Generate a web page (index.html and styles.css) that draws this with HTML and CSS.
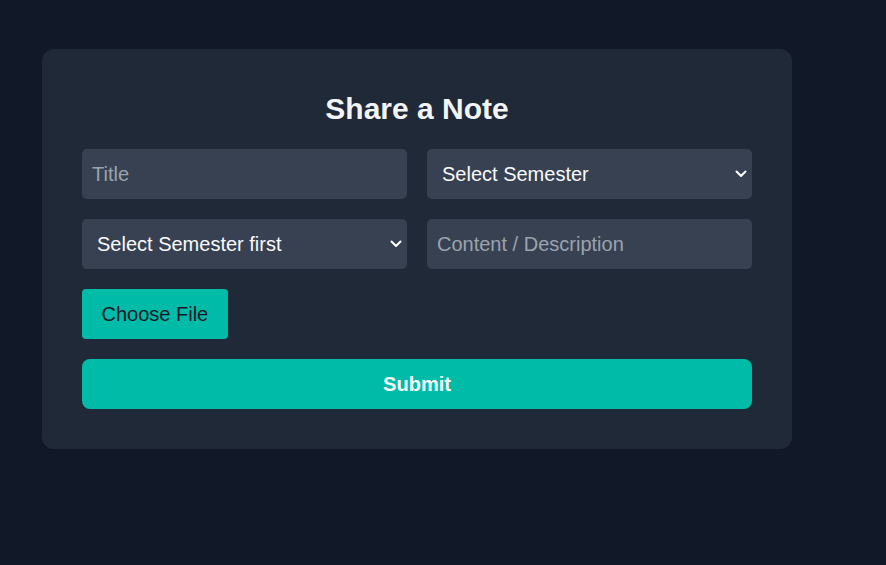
FILE: index.html
```html
<!DOCTYPE html>
<html lang="en">
<head>
<meta charset="utf-8">
<title>Share a Note</title>
<link rel="stylesheet" href="styles.css">
</head>
<body>
<main class="page">
  <form class="card">
    <h2 class="card-title">Share a Note</h2>
    <div class="grid">
      <input class="field" type="text" placeholder="Title">
      <div class="select-wrap">
        <select class="field select">
          <option>Select Semester</option>
        </select>
        <svg class="chevron" width="12" height="8" viewBox="0 0 12 8"><path d="M1.5 1.5 L6 6 L10.5 1.5" fill="none" stroke="#ffffff" stroke-width="2" stroke-linecap="round" stroke-linejoin="round"/></svg>
      </div>
      <div class="select-wrap">
        <select class="field select">
          <option>Select Semester first</option>
        </select>
        <svg class="chevron" width="12" height="8" viewBox="0 0 12 8"><path d="M1.5 1.5 L6 6 L10.5 1.5" fill="none" stroke="#ffffff" stroke-width="2" stroke-linecap="round" stroke-linejoin="round"/></svg>
      </div>
      <input class="field" type="text" placeholder="Content / Description">
    </div>
    <div class="file-row">
      <label class="file-btn">Choose File<input class="file-input" type="file"></label>
    </div>
    <button class="submit" type="button">Submit</button>
  </form>
</main>
</body>
</html>
```

FILE: styles.css
```css
* { box-sizing: border-box; }
html, body {
  margin: 0;
  background: #111827;
  font-family: "Liberation Sans", Arial, sans-serif;
}
.page {
  padding: 49px 0 0 42px;
  min-height: 565px;
}
.card {
  width: 750px;
  background: #1f2937;
  border-radius: 12px;
  padding: 40px;
  display: flex;
  flex-direction: column;
}
.card-title {
  margin: 3px 0 23px;
  text-align: center;
  color: #f3f4f6;
  font-size: 30px;
  font-weight: bold;
  line-height: 34px;
}
.grid {
  display: grid;
  grid-template-columns: 1fr 1fr;
  gap: 20px;
}
.field {
  width: 100%;
  height: 50px;
  border: none;
  outline: none;
  border-radius: 5px;
  background: #374151;
  color: #f9fafb;
  font-family: "Liberation Sans", Arial, sans-serif;
  font-size: 20px;
  padding: 0 10px;
}
.field::placeholder { color: #9ca3af; }
.select-wrap { position: relative; }
.select {
  -webkit-appearance: none;
  appearance: none;
  padding: 0 30px 0 15px;
}
.chevron {
  position: absolute;
  right: 5px;
  top: 21px;
  pointer-events: none;
}
.file-row {
  margin-top: 20px;
  display: flex;
}
.file-btn {
  display: flex;
  align-items: center;
  height: 50px;
  padding: 0 19.5px;
  background: #00bba7;
  color: #111827;
  border-radius: 4px;
  font-size: 20px;
}
.file-input { display: none; }
.submit {
  margin-top: 20px;
  height: 50px;
  width: 100%;
  border: none;
  border-radius: 8px;
  background: #00bba7;
  color: #f9fafb;
  font-family: "Liberation Sans", Arial, sans-serif;
  font-size: 20px;
  font-weight: bold;
}
```
